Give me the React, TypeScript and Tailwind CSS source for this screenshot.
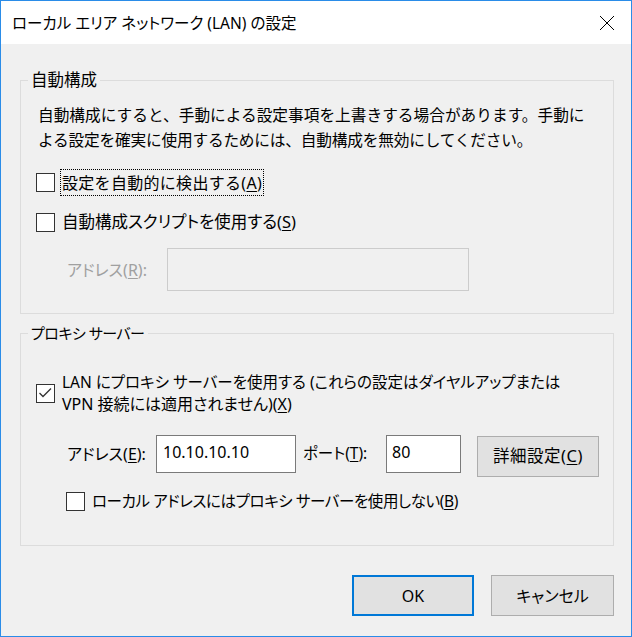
import React from 'react';

const FONT = '"Noto Sans", "Noto Sans CJK JP", sans-serif';

const Key: React.FC<{ k: string }> = ({ k }) => (
    <>
        (<span className="underline underline-offset-2 decoration-1">{k}</span>)
    </>
);

const CheckBox: React.FC<{ checked?: boolean }> = ({ checked }) => (
    <div className="w-[19px] h-[19px] shrink-0 border border-[#333333] bg-white">
        {checked && (
            <svg width="17" height="17" viewBox="0 0 17 17">
                <path d="M2.5 8 L6 11.5 L14 3.5" fill="none" stroke="#333333" strokeWidth="1.3" />
            </svg>
        )}
    </div>
);

const Button: React.FC<{ label: React.ReactNode; primary?: boolean; className?: string }> = ({ label, primary, className }) => (
    <div
        className={`flex items-center justify-center bg-[#e1e1e1] text-black ${
            primary ? 'border-2 border-[#0078d7]' : 'border border-[#adadad]'
        } ${className ?? ''}`}
    >
        {label}
    </div>
);

const App: React.FC = () => {
    return (
        <div
            className="w-[632px] h-[637px] border border-[#2a8ce8] bg-[#f0f0f0] flex flex-col text-[16px] text-black"
            style={{ fontFamily: FONT }}
        >
            {/* title bar */}
            <div className="h-[43px] bg-white flex items-center justify-between pl-[11px] pr-[16px] shrink-0">
                <span className="text-[15.5px] leading-[20px] [font-feature-settings:'palt']">ローカル エリア ネットワーク (LAN) の設定</span>
                <svg width="16" height="16" viewBox="0 0 16 16" className="mt-[1px]">
                    <path d="M1 1 L15 15 M15 1 L1 15" stroke="#000" strokeWidth="1" />
                </svg>
            </div>

            <div className="flex flex-col pl-[19px] pr-[17px] pt-[26px]">
                {/* auto config */}
                <fieldset className="w-[594px] border border-[#dcdcdc] px-0">
                    <legend className="ml-[7px] px-[3px] leading-[20px] text-[16.5px]">自動構成</legend>
                    <div className="flex flex-col pl-[15px] pb-[22px]">
                        <p className="mt-[13px] pl-[2px] leading-[25px] whitespace-nowrap text-[15.7px]">
                            自動構成にすると、手動による設定事項を上書きする場合があります。手動に
                            <br />
                            <span className="tracking-[-0.2px]">よる設定を確実に使用するためには、自動構成を無効にしてください。</span>
                        </p>
                        <div className="mt-[16px] h-[27px] flex items-center">
                            <CheckBox />
                            <span className="ml-[5px] h-[27px] flex items-center px-[1px] border border-dotted border-black tracking-[0.3px]">
                                設定を自動的に検出する<Key k="A" />
                            </span>
                        </div>
                        <div className="mt-[13px] h-[27px] flex items-center">
                            <CheckBox />
                            <span className="ml-[5px] h-[27px] flex items-center px-[1px] border border-transparent text-[16.5px] [font-feature-settings:'palt']">
                                自動構成スクリプトを使用する<Key k="S" />
                            </span>
                        </div>
                        <div className="mt-[12px] h-[43px] flex items-center">
                            <span className="ml-[31px] w-[100px] text-[#a0a0a0] [font-feature-settings:'palt']">
                                アドレス<Key k="R" />:
                            </span>
                            <div className="w-[302px] h-[43px] border border-[#cccccc] bg-[#f0f0f0]" />
                        </div>
                    </div>
                </fieldset>

                {/* proxy */}
                <fieldset className="mt-[9px] w-[594px] border border-[#dcdcdc] px-0">
                    <legend className="ml-[7px] px-[3px] leading-[20px] text-[15px] tracking-[-0.5px] [font-feature-settings:'palt']">
                        プロキシ サーバー
                    </legend>
                    <div className="flex flex-col pl-[15px] pb-[30px]">
                        <div className="mt-[27px] flex items-center">
                            <CheckBox checked />
                            <span className="ml-[5px] px-[1px] border border-transparent leading-[22px] [font-feature-settings:'palt']">
                                <span className="text-[15.5px]">LAN にプロキシ サーバーを使用する (これらの設定はダイヤルアップまたは</span>
                                <br />
                                VPN 接続には適用されません)<Key k="X" />
                            </span>
                        </div>
                        <div className="mt-[19px] flex items-start">
                            <span className="ml-[31px] w-[89px] h-[38px] flex items-center [font-feature-settings:'palt']">
                                アドレス<Key k="E" />:
                            </span>
                            <div className="w-[140px] h-[38px] border border-[#7a7a7a] bg-white pl-[6px] pt-[5px] leading-[22px]">
                                10.10.10.10
                            </div>
                            <span className="ml-[7px] w-[83px] h-[38px] flex items-center text-[15.5px] [font-feature-settings:'palt']">
                                ポート<Key k="T" />:
                            </span>
                            <div className="w-[75px] h-[38px] border border-[#7a7a7a] bg-white pl-[5px] pt-[5px] leading-[22px]">
                                80
                            </div>
                            <Button
                                className="ml-[16px] mt-[1px] w-[122px] h-[41px] text-[16.5px] tracking-[0.5px]"
                                label={<>詳細設定<Key k="C" /></>}
                            />
                        </div>
                        <div className="mt-[11px] h-[27px] flex items-center pl-[30px]">
                            <CheckBox />
                            <span className="ml-[5px] px-[1px] border border-transparent text-[15.5px] tracking-[-0.4px] [font-feature-settings:'palt']">
                                ローカル アドレスにはプロキシ サーバーを使用しない<Key k="B" />
                            </span>
                        </div>
                    </div>
                </fieldset>

                {/* dialog buttons */}
                <div className="mt-[29px] flex justify-end gap-[17px]">
                    <Button primary className="w-[122px] h-[41px]" label="OK" />
                    <Button className="w-[123px] h-[41px] [font-feature-settings:'palt']" label="キャンセル" />
                </div>
            </div>
        </div>
    );
};

export default App;
